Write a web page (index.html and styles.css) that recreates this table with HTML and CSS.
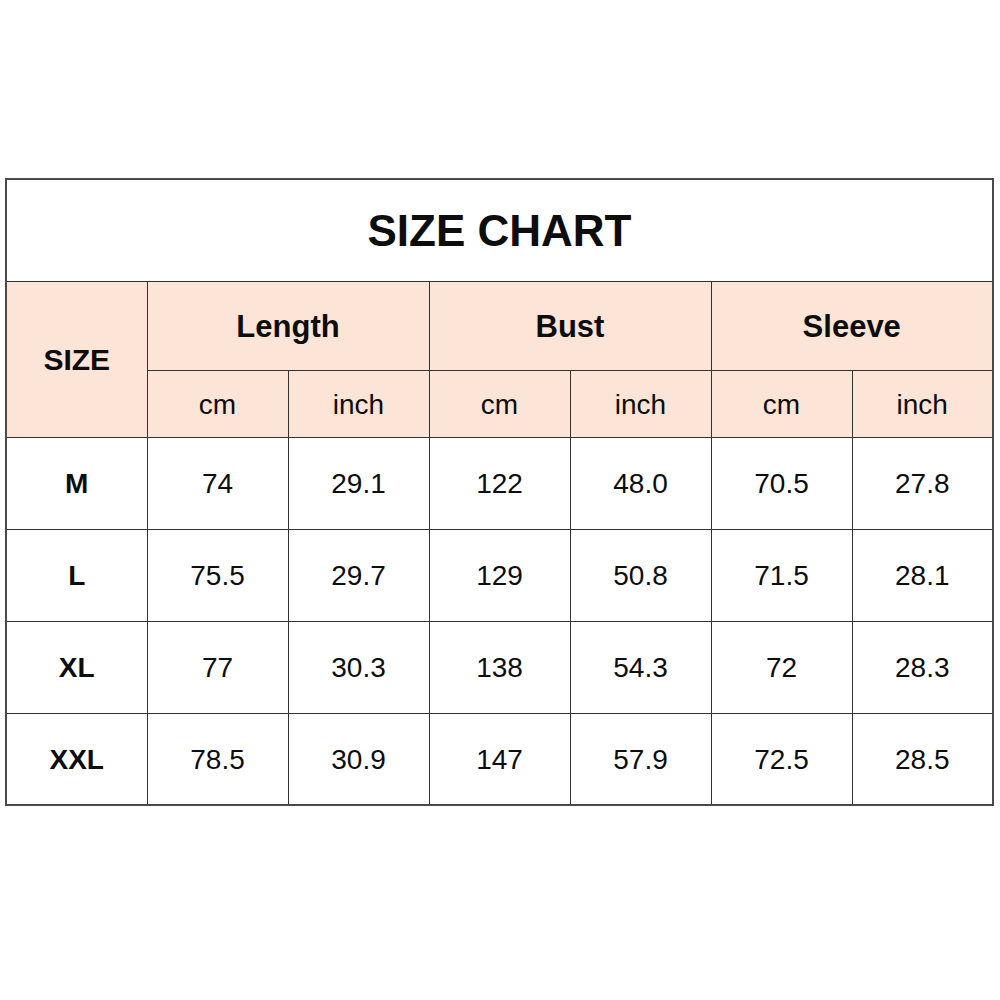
FILE: index.html
```html
<!DOCTYPE html>
<html>
<head>
<meta charset="utf-8">
<link rel="stylesheet" href="styles.css">
</head>
<body>
<div class="page">
  <table class="chart">
    <colgroup>
      <col class="c"><col class="c"><col class="c"><col class="c"><col class="c"><col class="c"><col class="c">
    </colgroup>
    <tr class="title-row"><th colspan="7" class="title">SIZE CHART</th></tr>
    <tr class="head1">
      <th rowspan="2" class="size-head">SIZE</th>
      <th colspan="2" class="group">Length</th>
      <th colspan="2" class="group">Bust</th>
      <th colspan="2" class="group">Sleeve</th>
    </tr>
    <tr class="head2">
      <td class="unit">cm</td><td class="unit">inch</td>
      <td class="unit">cm</td><td class="unit">inch</td>
      <td class="unit">cm</td><td class="unit">inch</td>
    </tr>
    <tr class="data"><th class="size">M</th><td>74</td><td>29.1</td><td>122</td><td>48.0</td><td>70.5</td><td>27.8</td></tr>
    <tr class="data"><th class="size">L</th><td>75.5</td><td>29.7</td><td>129</td><td>50.8</td><td>71.5</td><td>28.1</td></tr>
    <tr class="data"><th class="size">XL</th><td>77</td><td>30.3</td><td>138</td><td>54.3</td><td>72</td><td>28.3</td></tr>
    <tr class="data last"><th class="size">XXL</th><td>78.5</td><td>30.9</td><td>147</td><td>57.9</td><td>72.5</td><td>28.5</td></tr>
  </table>
</div>
</body>
</html>
```

FILE: styles.css
```css
html, body {
  margin: 0;
  padding: 0;
  background: #ffffff;
}

.page {
  padding: 178px 0 0 5px;
  font-family: "Liberation Sans", Arial, sans-serif;
  color: #0d0d0d;
}

.chart {
  border-collapse: collapse;
  table-layout: fixed;
  width: 987px;
  border: 2px solid #4a4a4a;
}

.chart col.c {
  width: 141px;
}

.chart th,
.chart td {
  border: 1px solid #333333;
  padding: 2px 0 0;
  text-align: center;
  vertical-align: middle;
}

.title-row {
  height: 102px;
}

.title {
  font-size: 44px;
  font-weight: 700;
  background: #ffffff;
}

.head1 {
  height: 89px;
}

.head2 {
  height: 67px;
}

.head1 th,
.head2 td {
  background: #fce4d6;
}

.size-head {
  font-size: 30px;
  font-weight: 700;
}

.group {
  font-size: 31px;
  font-weight: 700;
}

.unit {
  font-size: 28px;
  font-weight: 400;
}

.data {
  height: 92px;
}

.data td {
  font-size: 28px;
  font-weight: 400;
}

.data .size {
  font-size: 28px;
  font-weight: 700;
}
```
